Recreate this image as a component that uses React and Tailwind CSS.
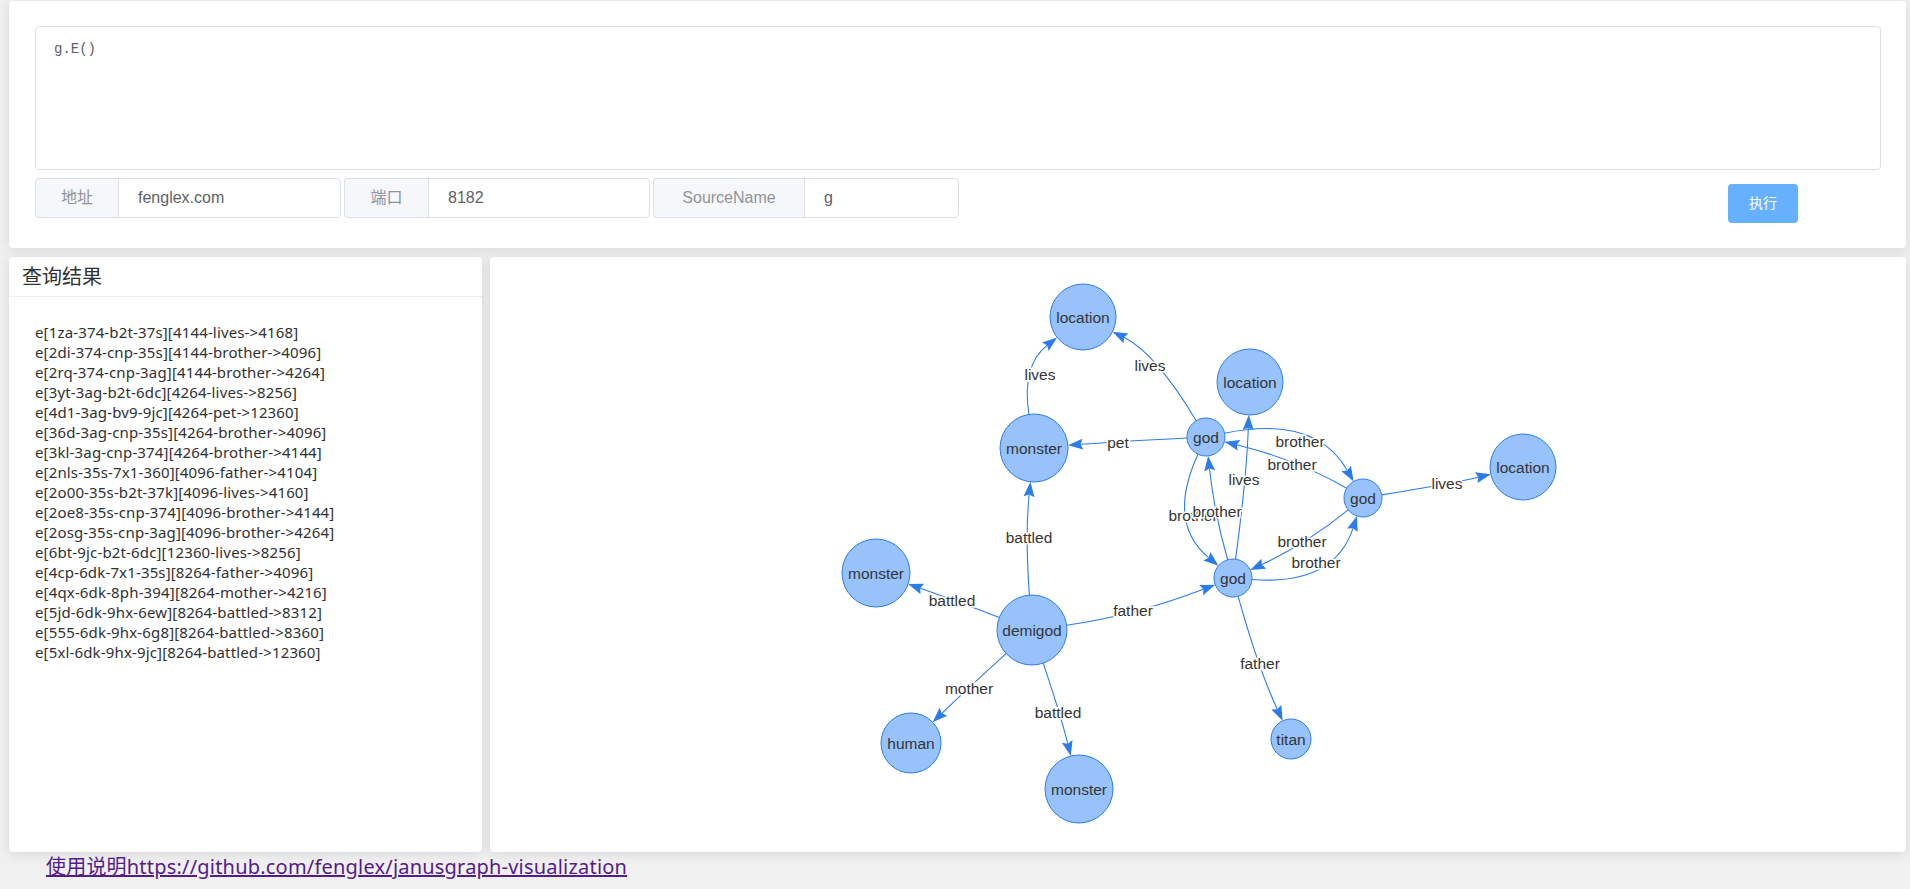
import React from 'react';

const results = [
  'e[1za-374-b2t-37s][4144-lives->4168]',
  'e[2di-374-cnp-35s][4144-brother->4096]',
  'e[2rq-374-cnp-3ag][4144-brother->4264]',
  'e[3yt-3ag-b2t-6dc][4264-lives->8256]',
  'e[4d1-3ag-bv9-9jc][4264-pet->12360]',
  'e[36d-3ag-cnp-35s][4264-brother->4096]',
  'e[3kl-3ag-cnp-374][4264-brother->4144]',
  'e[2nls-35s-7x1-360][4096-father->4104]',
  'e[2o00-35s-b2t-37k][4096-lives->4160]',
  'e[2oe8-35s-cnp-374][4096-brother->4144]',
  'e[2osg-35s-cnp-3ag][4096-brother->4264]',
  'e[6bt-9jc-b2t-6dc][12360-lives->8256]',
  'e[4cp-6dk-7x1-35s][8264-father->4096]',
  'e[4qx-6dk-8ph-394][8264-mother->4216]',
  'e[5jd-6dk-9hx-6ew][8264-battled->8312]',
  'e[555-6dk-9hx-6g8][8264-battled->8360]',
  'e[5xl-6dk-9hx-9jc][8264-battled->12360]',
];

// node positions are in page coordinates, shifted into the card below
const nodes = {
  tartarus: { x: 1083, y: 317, r: 33, label: 'location' },
  sky: { x: 1250, y: 382, r: 33, label: 'location' },
  sea: { x: 1523, y: 467, r: 33, label: 'location' },
  cerberus: { x: 1034, y: 448, r: 34, label: 'monster' },
  nemean: { x: 876, y: 573, r: 34, label: 'monster' },
  hydra: { x: 1079, y: 789, r: 34, label: 'monster' },
  hercules: { x: 1032, y: 630, r: 35, label: 'demigod' },
  alcmene: { x: 911, y: 743, r: 30, label: 'human' },
  saturn: { x: 1291, y: 739, r: 20, label: 'titan' },
  pluto: { x: 1206, y: 437, r: 19, label: 'god' },
  jupiter: { x: 1233, y: 578, r: 19, label: 'god' },
  neptune: { x: 1363, y: 498, r: 19, label: 'god' },
};

// [from, to, label, labelX, labelY] — the curve passes through the label point
const edges = [
  ['neptune', 'sea', 'lives', 1447, 483],
  ['neptune', 'jupiter', 'brother', 1302, 541],
  ['neptune', 'pluto', 'brother', 1292, 464],
  ['pluto', 'tartarus', 'lives', 1150, 365],
  ['pluto', 'cerberus', 'pet', 1118, 442],
  ['pluto', 'jupiter', 'brother', 1193, 515],
  ['pluto', 'neptune', 'brother', 1300, 441],
  ['jupiter', 'sky', 'lives', 1244, 479],
  ['jupiter', 'saturn', 'father', 1260, 663],
  ['jupiter', 'pluto', 'brother', 1217, 511],
  ['jupiter', 'neptune', 'brother', 1316, 562],
  ['cerberus', 'tartarus', 'lives', 1040, 374],
  ['hercules', 'cerberus', 'battled', 1029, 537],
  ['hercules', 'nemean', 'battled', 952, 600],
  ['hercules', 'jupiter', 'father', 1133, 610],
  ['hercules', 'alcmene', 'mother', 969, 688],
  ['hercules', 'hydra', 'battled', 1058, 712],
];

const graphFont = { fontFamily: "'Liberation Sans', Arial, sans-serif" };

const unit = (dx, dy) => {
  const l = Math.hypot(dx, dy) || 1;
  return [dx / l, dy / l];
};

const Edge = ({ from, to, label, lx, ly }) => {
  const a = nodes[from];
  const b = nodes[to];
  const cx = 2 * lx - (a.x + b.x) / 2;
  const cy = 2 * ly - (a.y + b.y) / 2;
  const [sx, sy] = unit(cx - a.x, cy - a.y);
  const [ex, ey] = unit(b.x - cx, b.y - cy);
  const p0 = [a.x + sx * a.r, a.y + sy * a.r];
  const tip = [b.x - ex * b.r, b.y - ey * b.r];
  const len = 15;
  const w = 5.5;
  const back = [tip[0] - ex * len, tip[1] - ey * len];
  const notch = [tip[0] - ex * len * 0.85, tip[1] - ey * len * 0.85];
  const left = [back[0] - ey * w, back[1] + ex * w];
  const right = [back[0] + ey * w, back[1] - ex * w];
  return (
    <g>
      <path
        d={`M${p0[0]},${p0[1]} Q${cx},${cy} ${notch[0]},${notch[1]}`}
        fill="none"
        stroke="#2b7ce9"
        strokeWidth="1.1"
      />
      <polygon
        points={`${tip[0]},${tip[1]} ${left[0]},${left[1]} ${notch[0]},${notch[1]} ${right[0]},${right[1]}`}
        fill="#2b7ce9"
      />
      <text
        x={lx}
        y={ly}
        textAnchor="middle"
        dominantBaseline="central"
        fontSize="15.5"
        fill="#343434"
        stroke="#ffffff"
        strokeWidth="3"
        paintOrder="stroke"
        style={graphFont}
      >
        {label}
      </text>
    </g>
  );
};

const Graph = () => (
  <svg className="block w-full h-full" viewBox="0 0 1416 595">
    <g transform="translate(-490,-257)">
      {edges.map(([f, t, l, x, y], i) => (
        <Edge key={i} from={f} to={t} label={l} lx={x} ly={y} />
      ))}
      {Object.entries(nodes).map(([id, n]) => (
        <g key={id}>
          <circle cx={n.x} cy={n.y} r={n.r} fill="#97c2fc" stroke="#2b7ce9" strokeWidth="1" />
          <text
            x={n.x}
            y={n.y}
            textAnchor="middle"
            dominantBaseline="central"
            fontSize="15.5"
            fill="#343434"
            style={graphFont}
          >
            {n.label}
          </text>
        </g>
      ))}
    </g>
  </svg>
);

const InputGroup = ({ label, labelWidth, value }) => (
  <div className="flex w-[306px] h-[40px] text-[16px]">
    <div
      className={`${labelWidth} flex items-center justify-center bg-[#f5f7fa] border border-[#dcdfe6] border-r-0 rounded-l-[4px] text-[#909399]`}
    >
      {label}
    </div>
    <div className="flex-1 flex items-center pl-[19px] border border-[#dcdfe6] rounded-r-[4px] bg-white text-[#606266]">
      {value}
    </div>
  </div>
);

const App = () => {
  return (
    <div
      className="min-h-screen bg-[#f0f0f0] pl-[9px] pr-[4px] pt-[1px]"
      style={{ fontFamily: "'Liberation Sans', 'Noto Sans CJK SC', sans-serif" }}
    >
      <div className="h-[247px] bg-white rounded-[4px] shadow-[0_2px_12px_0_rgba(0,0,0,0.1)] pt-[25px] pl-[26px] pr-[25px]">
        <textarea
          readOnly
          value="g.E()"
          className="block w-full h-[144px] resize-none border border-[#dcdfe6] rounded-[4px] px-[18px] pt-[12px] text-[14px] leading-[21px] text-[#606266] outline-none"
          style={{ fontFamily: "'Liberation Mono', 'Noto Sans CJK SC', monospace" }}
        />
        <div className="flex items-start mt-[8px]">
          <div className="flex gap-[3px]">
            <InputGroup label="地址" labelWidth="w-[83px]" value="fenglex.com" />
            <InputGroup label="端口" labelWidth="w-[84px]" value="8182" />
            <InputGroup label="SourceName" labelWidth="w-[151px]" value="g" />
          </div>
          <button className="ml-auto mr-[83px] mt-[6px] w-[70px] h-[39px] rounded-[4px] bg-[#66b1ff] text-white text-[14px]">
            执行
          </button>
        </div>
      </div>

      <div className="flex gap-[8px] mt-[9px] h-[595px]">
        <div className="w-[473px] bg-white rounded-[4px] shadow-[0_2px_12px_0_rgba(0,0,0,0.1)] flex flex-col">
          <div className="h-[40px] flex items-center pl-[13px] border-b border-[#ebeef5] text-[20px] text-[#303133]">
            查询结果
          </div>
          <div
            className="pt-[25px] pl-[26px] text-[15px] leading-[20px] tracking-[0.15px] text-[#303133]"
            style={{ fontFamily: "'Noto Sans', 'Noto Sans CJK SC', sans-serif" }}
          >
            {results.map((r) => (
              <div key={r}>{r}</div>
            ))}
          </div>
        </div>
        <div className="flex-1 bg-white rounded-[4px] shadow-[0_2px_12px_0_rgba(0,0,0,0.1)] overflow-hidden">
          <Graph />
        </div>
      </div>

      <div className="pl-[37px] pt-[1px] text-[20px] leading-[28px] tracking-[0.2px]">
        <a
          href="https://github.com/fenglex/janusgraph-visualization"
          className="text-[#551a8b] underline"
          style={{ fontFamily: "'Noto Sans', 'Noto Sans CJK SC', sans-serif" }}
        >
          使用说明https://github.com/fenglex/janusgraph-visualization
        </a>
      </div>
    </div>
  );
};

export default App;
